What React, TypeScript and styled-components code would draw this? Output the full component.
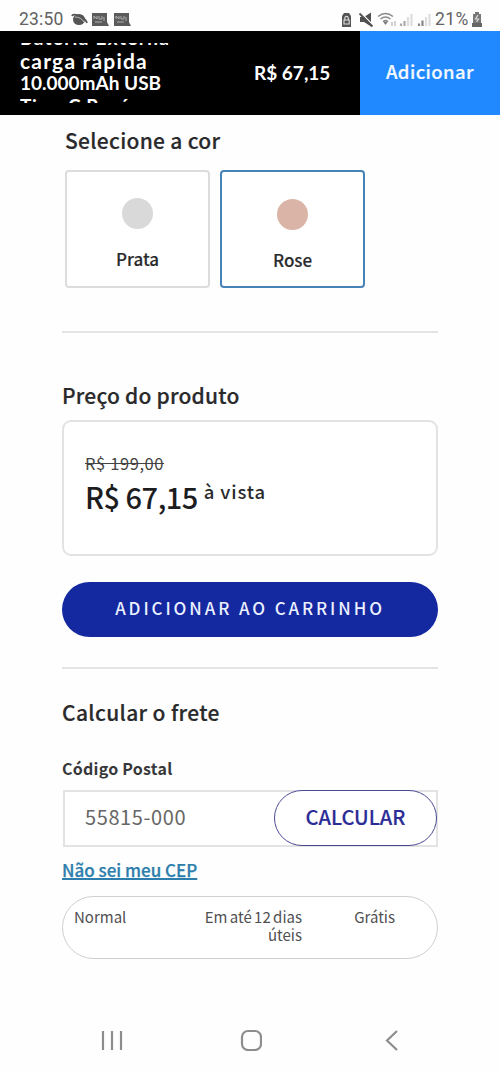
import React from "react";
import styled, { createGlobalStyle } from "styled-components";

const GlobalStyle = createGlobalStyle`
  * { box-sizing: border-box; }
  body {
    margin: 0;
    background: #fefefe;
    color: #2a2a2c;
    font-family: "Noto Sans CJK SC", "Noto Sans", sans-serif;
  }
`;

const Screen = styled.div`
  width: 500px;
  height: 1072px;
  display: flex;
  flex-direction: column;
  overflow: hidden;
`;

const StatusBar = styled.header`
  height: 31px;
  padding: 8px 17px 0 19px;
  display: flex;
  justify-content: space-between;
  color: #626262;
  font: 400 17px/23px Roboto, sans-serif;
`;

const StatusGroup = styled.div`
  display: flex;
  align-items: center;
  height: 23px;
`;

const Clock = styled.span`
  width: 52px;
  font-size: 17.5px;
  letter-spacing: 0.2px;
  white-space: nowrap;
`;

const Percent = styled.span`
  margin-left: -4px;
  width: 36px;
  letter-spacing: 0.4px;
  font-size: 17.5px;
  white-space: nowrap;
`;

const BuyBar = styled.section`
  height: 84px;
  display: flex;
  background: #000;
  color: #fff;
`;

const ProductName = styled.div`
  width: 200px;
  height: 60px;
  margin: 12px 0 0 20px;
  overflow: hidden;
  font: 700 19px/22.5px Lato, sans-serif;
`;

const NameLines = styled.div`
  margin-top: -16px;
  white-space: nowrap;
`;

const NameLine = styled.div<{ $spacing?: number; $size?: number }>`
  font-size: ${(p) => p.$size ?? 19}px;
  letter-spacing: ${(p) => p.$spacing ?? 0}px;
`;

const BarPrice = styled.div`
  width: 140px;
  padding: 0 0 0 34px;
  font: 700 19px/84px Lato, sans-serif;
  white-space: nowrap;
`;

const BarButton = styled.button`
  width: 140px;
  border: 0;
  padding: 0 0 4px;
  background: #2189ff;
  color: #f4f9ff;
  font: 500 18.5px/28px "Noto Sans CJK SC", sans-serif;
  letter-spacing: 0.4px;
  -webkit-text-stroke: 0.2px currentColor;
`;

const Content = styled.main`
  width: 376px;
  margin-left: 62px;
  flex: 1;
  display: flex;
  flex-direction: column;
`;

const Heading = styled.h2<{ $top: number; $indent?: number; $spacing?: number }>`
  margin: ${(p) => p.$top}px 0 0 ${(p) => p.$indent ?? 0}px;
  font-size: 21px;
  font-weight: 500;
  line-height: 30px;
  letter-spacing: ${(p) => p.$spacing ?? 0}px;
  white-space: nowrap;
  -webkit-text-stroke: 0.2px currentColor;
`;

const Swatches = styled.div`
  display: flex;
  gap: 10px;
  margin: 15px 0 0 3px;
`;

const Swatch = styled.button<{ $selected?: boolean }>`
  width: 145px;
  height: 118px;
  padding: ${(p) => (p.$selected ? 27 : 26)}px 0 0;
  display: flex;
  flex-direction: column;
  align-items: center;
  gap: 17px;
  background: #fff;
  border: 2px solid ${(p) => (p.$selected ? "#4683b6" : "#dcdcde")};
  border-radius: 4px;
  color: #2a2a2c;
  font: 500 17px/26px "Noto Sans CJK SC", sans-serif;
  -webkit-text-stroke: 0.15px currentColor;
`;

const Dot = styled.span<{ $color: string }>`
  width: 31px;
  height: 31px;
  border-radius: 50%;
  background: ${(p) => p.$color};
`;

const Rule = styled.hr<{ $top: number }>`
  width: 100%;
  height: 2px;
  margin: ${(p) => p.$top}px 0 0;
  border: 0;
  background: #e4e4e4;
`;

const PriceBox = styled.div`
  height: 136px;
  margin-top: 10px;
  padding: 29px 0 0 21px;
  background: #fff;
  border: 2px solid #e3e3e4;
  border-radius: 9px;
`;

const OldPrice = styled.div`
  font-size: 16.5px;
  line-height: 24px;
  letter-spacing: 0.6px;
  color: #444;
  text-decoration: line-through;
`;

const PriceRow = styled.div`
  display: flex;
  gap: 6px;
  white-space: nowrap;
`;

const Price = styled.strong`
  font-size: 29px;
  font-weight: 500;
  line-height: 42px;
  letter-spacing: -0.5px;
  color: #1d1d1f;
`;

const PriceNote = styled.span`
  font-size: 18.5px;
  font-weight: 500;
  line-height: 32px;
  letter-spacing: 0.85px;
`;

const CartButton = styled.button`
  height: 55px;
  margin-top: 26px;
  padding: 0 0 3px;
  border: 0;
  border-radius: 28px;
  background: #1428a0;
  color: #eaf0ff;
  font: 500 17px/26px "Noto Sans CJK SC", sans-serif;
  letter-spacing: 2.9px;
`;

const Label = styled.label`
  margin-top: 29px;
  font-size: 16px;
  font-weight: 700;
  line-height: 24px;
  letter-spacing: 0.25px;
  color: #38383a;
`;

const ZipField = styled.div`
  height: 57px;
  margin: 10px 0 0 1px;
  display: flex;
  justify-content: space-between;
  border: 2px solid #e3e3e6;
  background: #fff;
`;

const ZipValue = styled.span`
  padding-left: 20px;
  color: #666;
  font-size: 20px;
  line-height: 50px;
  letter-spacing: 0.6px;
`;

const CalcButton = styled.button`
  width: 163px;
  height: 56px;
  margin: -2px -1px 0 0;
  padding: 0 0 2px;
  border: 1.5px solid #4b4a94;
  border-radius: 28px;
  background: #fff;
  color: #2b2c96;
  font: 500 20px/28px "Noto Sans CJK SC", sans-serif;
  -webkit-text-stroke: 0.15px currentColor;
`;

const HelpLink = styled.a`
  align-self: flex-start;
  margin-top: 10px;
  font-size: 17px;
  font-weight: 500;
  line-height: 26px;
  color: #2d7eac;
  text-decoration: underline;
  text-decoration-thickness: 2px;
  text-underline-offset: 1px;
  text-decoration-skip-ink: none;
  white-space: nowrap;
  -webkit-text-stroke: 0.25px currentColor;
`;

const ShippingOption = styled.div`
  height: 63px;
  margin-top: 13px;
  padding: 11px 42px 0 11px;
  display: grid;
  grid-template-columns: 120px 108px 1fr;
  border: 1px solid #cfcfcf;
  border-radius: 32px;
  background: #fff;
  color: #505052;
  font-size: 15px;
  line-height: 18px;
  word-spacing: -1px;
`;

const ShippingCell = styled.span<{ $right?: boolean }>`
  text-align: ${(p) => (p.$right ? "right" : "left")};
`;

const NavBar = styled.nav`
  height: 62px;
  padding: 19px 99px 0 101px;
  display: flex;
  justify-content: space-between;
`;

const NavIcon = styled.svg`
  width: 22px;
  height: 22px;
  fill: none;
  stroke: #8d8d8d;
  stroke-width: 2.2;
`;

function NotificationIcons() {
  return (
    <svg width="62" height="18" viewBox="0 0 62 18">
      <ellipse cx="8" cy="8.5" rx="6" ry="5.5" fill="#555" />
      <path d="M1 5C2 1 15 7 16 12" fill="none" stroke="#555" strokeWidth="1.7" />
      <path d="M4 6q6 0 9 5" fill="none" stroke="#bbb" strokeWidth="1" />
      {[21, 43].map((x) => (
        <g key={x} transform={`translate(${x} 2)`}>
          <path d="M0 0h15v9l2 4H0z" fill="#5b5b5b" />
          <path d="M2 6V3l3 3V3M7 3v3h3V3M12 4v4M3 9h7" fill="none" stroke="#b0b0b0" strokeWidth="1" />
        </g>
      ))}
    </svg>
  );
}

function SystemIcons() {
  return (
    <svg width="98" height="18" viewBox="0 0 98 18">
      <path d="M1 5l2-3h5l2 3v11H1z" fill="#555" />
      <path d="M3.8 9V6.8a1.8 1.8 0 013.5 0V9M3 9h5.2v4H3z" fill="none" stroke="#ddd" strokeWidth="1.1" />
      <path d="M19 6h4l7-4.5v14l-7-4.5h-4z" fill="#505050" />
      <path d="M19.5 1.5l13 13" stroke="#fefefe" strokeWidth="1.5" />
      <path d="M18.5 2.5l13 13" stroke="#505050" strokeWidth="1.8" />
      <path d="M37 5.5q7.5-6 15 0M39.5 8q5-4 10 0M42 10.5q2.5-2 5 0" fill="none" stroke="#8a8a8a" strokeWidth="1.5" />
      <path d="M42 10.5h5L44.5 14z" fill="#777" />
      <path d="M51 11v4M54 10v5" stroke="#bbb" strokeWidth="1.3" />
      <g strokeWidth="2.2">
        <path d="M60 12.5V15M63.5 10v5" stroke="#aaa" />
        <path d="M67 6v9M70.5 3v12" stroke="#ddd" />
        <path d="M78 12.5V15M81.5 9.5V15" stroke="#888" />
        <path d="M85 6v9M88.5 3v12" stroke="#ddd" />
      </g>
    </svg>
  );
}

function BatteryIcon() {
  return (
    <svg width="12" height="18" viewBox="0 0 12 18">
      <path d="M4 1h4v2h2v9H2V3h2z" fill="#777" />
      <path d="M1 12h10v4H1z" fill="#666" />
      <path d="M7 4L4.5 8h3L5.5 11" fill="none" stroke="#ddd" strokeWidth="1.2" />
    </svg>
  );
}

export default function App() {
  return (
    <>
      <GlobalStyle />
      <Screen>
        <StatusBar>
          <StatusGroup>
            <Clock>23:50</Clock>
            <NotificationIcons />
          </StatusGroup>
          <StatusGroup>
            <SystemIcons />
            <Percent>21%</Percent>
            <BatteryIcon />
          </StatusGroup>
        </StatusBar>
        <BuyBar>
          <ProductName>
            <NameLines>
              <NameLine $spacing={1.3}>Bateria Externa</NameLine>
              <NameLine $size={21} $spacing={1.2}>carga rápida</NameLine>
              <NameLine>10.000mAh USB</NameLine>
              <NameLine $spacing={0.6}>Tipo-C Rosé</NameLine>
            </NameLines>
          </ProductName>
          <BarPrice>R$ 67,15</BarPrice>
          <BarButton>Adicionar</BarButton>
        </BuyBar>
        <Content>
          <Heading $top={10} $indent={3} $spacing={0.3}>Selecione a cor</Heading>
          <Swatches>
            <Swatch>
              <Dot $color="#d9d9da" />
              Prata
            </Swatch>
            <Swatch $selected>
              <Dot $color="#dab5a7" />
              Rose
            </Swatch>
          </Swatches>
          <Rule $top={43} />
          <Heading $top={47} $spacing={0.2}>Preço do produto</Heading>
          <PriceBox>
            <OldPrice>R$ 199,00</OldPrice>
            <PriceRow>
              <Price>R$ 67,15</Price>
              <PriceNote>à vista</PriceNote>
            </PriceRow>
          </PriceBox>
          <CartButton>ADICIONAR AO CARRINHO</CartButton>
          <Rule $top={30} />
          <Heading $top={28} $spacing={0.35}>Calcular o frete</Heading>
          <Label>Código Postal</Label>
          <ZipField>
            <ZipValue>55815-000</ZipValue>
            <CalcButton>CALCULAR</CalcButton>
          </ZipField>
          <HelpLink>Não sei meu CEP</HelpLink>
          <ShippingOption>
            <ShippingCell>Normal</ShippingCell>
            <ShippingCell $right>Em até 12 dias úteis</ShippingCell>
            <ShippingCell $right>Grátis</ShippingCell>
          </ShippingOption>
        </Content>
        <NavBar>
          <NavIcon viewBox="0 0 22 22"><path d="M2 2v19M11 2v19M20 2v19" /></NavIcon>
          <NavIcon viewBox="0 0 22 22"><rect x="2" y="2" width="19" height="19" rx="6" /></NavIcon>
          <NavIcon viewBox="0 0 22 22"><path d="M18 2L8 11.5L18 21" /></NavIcon>
        </NavBar>
      </Screen>
    </>
  );
}
